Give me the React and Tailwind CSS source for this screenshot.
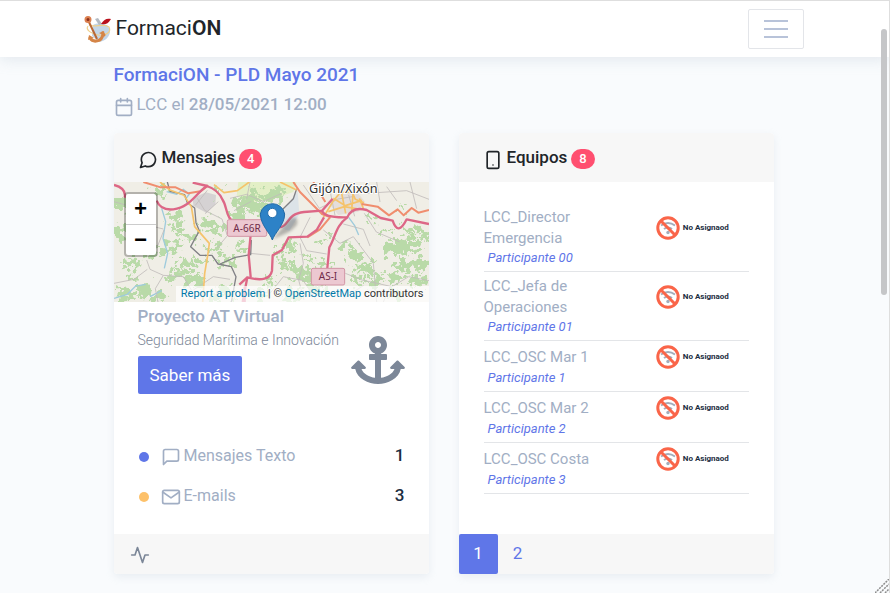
import React from "react";
import { FiActivity, FiCalendar, FiMail, FiMessageCircle, FiMessageSquare, FiSmartphone } from "react-icons/fi";
import { FaAnchor } from "react-icons/fa";

const teams = [
  { name: "LCC_Director Emergencia", member: "Participante 00" },
  { name: "LCC_Jefa de Operaciones", member: "Participante 01" },
  { name: "LCC_OSC Mar 1", member: "Participante 1" },
  { name: "LCC_OSC Mar 2", member: "Participante 2" },
  { name: "LCC_OSC Costa", member: "Participante 3" },
];

const counters = [
  { label: "Mensajes Texto", total: 1, Icon: FiMessageSquare, dot: "bg-[#5f76e8]" },
  { label: "E-mails", total: 3, Icon: FiMail, dot: "bg-[#fdc16a]" },
];

function Logo() {
  return (
    <svg viewBox="0 0 28 28" className="mt-0.5 size-7 shrink-0" aria-hidden="true">
      <path d="M9 9c4-2 10-2 15 1l2 5c0 6-5 10-11 11L8 20z" fill="#c3d6e8" />
      <path d="M11 3l3-1 4 6-3 1z" fill="#b4bac2" />
      <path d="M27 3c-4-1-7 0-10 5 4 1 7 0 10-5z" fill="#b9101c" />
      <path d="M5 9c5 3 15-2 20 2 3 6-5 9-11 8C8 18 1 14 4 10" fill="none" stroke="#efd08b" strokeWidth="1.2" />
      <path d="M4 4l9 19" stroke="#b96835" strokeWidth="2" />
      <circle cx="4" cy="3.5" r="2.5" fill="#8c2f1c" stroke="#dc8050" strokeWidth="2" />
      <path d="M6 22c3 5 12 4 13-4l1 1" fill="none" stroke="#d58547" strokeWidth="3" strokeLinecap="round" />
      <path d="M4 24l1-5 5 3zM15 17l5-2 1 5z" fill="#d58547" />
    </svg>
  );
}

// Patches of woodland, each as centre x, centre y and relative size.
const woods = [
  [30, 215, 20], [25, 300, 26], [60, 400, 22], [110, 370, 18], [165, 355, 18], [205, 300, 16], [195, 345, 15],
  [150, 175, 20], [190, 260, 22], [240, 320, 18], [225, 400, 24], [190, 430, 18], [250, 445, 22], [285, 280, 22],
  [325, 290, 18], [310, 350, 20], [345, 390, 20], [390, 350, 16], [400, 215, 26], [440, 230, 26], [425, 190, 16],
  [470, 195, 20], [385, 250, 22], [500, 185, 20], [505, 370, 14], [540, 345, 20], [560, 420, 24], [520, 400, 18],
  [480, 450, 16], [595, 430, 20], [610, 470, 22], [640, 400, 16], [540, 490, 22], [730, 370, 22], [700, 340, 16],
  [760, 410, 24], [790, 450, 20], [740, 450, 18], [850, 350, 26], [900, 340, 28], [930, 400, 26], [880, 400, 26],
  [850, 440, 22], [920, 450, 24], [900, 300, 20], [825, 300, 14], [100, 480, 22], [40, 490, 22], [150, 500, 20],
  [340, 480, 20], [310, 500, 18], [450, 490, 18], [590, 380, 12], [660, 310, 9], [620, 330, 10], [780, 260, 12],
  [870, 230, 10], [270, 390, 14], [60, 250, 10], [320, 180, 12], [850, 490, 18], [60, 440, 12], [940, 310, 16],
];

function MapDrawing() {
  return (
    <svg viewBox="12 156 945 360" preserveAspectRatio="xMidYMid slice" className="block h-full w-full" role="img" aria-label="Gijón/Xixón">
      <defs>
        <filter id="rough" x="-10%" y="-10%" width="120%" height="120%">
          <feTurbulence type="fractalNoise" baseFrequency="0.05" numOctaves="3" seed="4" />
          <feDisplacementMap in="SourceGraphic" scale="75" xChannelSelector="R" yChannelSelector="G" />
        </filter>
        <filter id="shade">
          <feGaussianBlur stdDeviation="5" />
        </filter>
      </defs>
      <rect x="-400" y="100" width="1800" height="500" fill="#f0eee6" />
      <path d="M385 156h175l-10 30-60 20-70 12-40-20z" fill="#e3efc6" />
      <path d="M680 195l60-10 25 30-20 30-60 10-25-30z" fill="#e4dedb" />
      <path d="M248 205l40-18 30 8-2 28-26 26-40-22z" fill="#d5d2d3" />
      <path d="M525 235l38-52 5 70-30 50-28-10z" fill="#dce3e8" />
      <g fill="#b9daa8" filter="url(#rough)">
        {woods.map(([x, y, s], i) => (
          <ellipse key={i} cx={x + 4} cy={y + 4} rx={s * 1.15} ry={s * 0.8} />
        ))}
      </g>
      <g fill="none" stroke="#9ecbdc" strokeWidth="4">
        <path d="M155 235l12 40-8 50 14 45-10 45" />
        <path d="M170 185l30 8 20-15 18 14-12 16M12 505l40-12 25-25 30-5M120 500l35-18" />
        <path d="M716 262l18 25 12 28" />
      </g>
      <g fill="none" stroke="#c0bcbb" strokeWidth="2.5" strokeLinejoin="round">
        <path d="M12 215l70 20 30 50 48 12M112 370l30-20 20-50M110 390l10 28 40 18 60 4 24 40" />
        <path d="M12 460l60-12 40-30M160 436l-24 40 8 40M250 480l60-40 50 8" />
        <path d="M262 205l22 36 52 26 16 50-30 36M292 181l-36 45M325 215l-40 36" />
        <path d="M360 205l50-12 50 22 55-25M420 156l-10 50M372 242l52-28" />
        <path d="M430 480l50 10 40-50 60 12 40 60M480 376l-60-6M570 340l10 60-14 50 16 60" />
        <path d="M600 262l-30 60 20 40 60 10M640 300l50 40 40-20 30 40 30 40 10 116" />
        <path d="M700 282l60 16 20 50M763 250l36 56 70 30M800 156l10 60M830 170l30 42M770 190l120-8 67 26" />
        <path d="M706 430l50 20 90 20 50-30 61 12M820 516l20-46M900 156l20 80M700 505l60-38" />
        <path d="M580 165l48 70 56-28 50-8M655 156l20 100M716 195l18 64" />
      </g>
      <g fill="none" stroke="#808085" strokeWidth="4" strokeLinejoin="round">
        <path d="M172 156l8 28 44 10 8 24 22 16 4 44 10 24-26 48 28 26 36 0 18 26 40 8 14 30 -14 76" />
        <path d="M560 176l-10 30-34 34M330 402l46-20 46-8 2-44" />
      </g>
      <g fill="none" stroke="#f5c36b" strokeWidth="5" strokeLinejoin="round">
        <path d="M150 156l30 24 42 16 22 34 10 60 44 50-4 30-10 60-6 86" />
        <path d="M418 156l-36 26-40 6-30-24" />
        <path d="M510 156l50 24M640 262l28-46 22-28 36-2 10 22 26 10" />
        <path d="M670 205l36 22 50-16M695 190l12 60M655 245l48-15 48 8M730 185l-5 55M748 205l12 30" />
      </g>
      <g fill="none" stroke="#f08d6e" strokeWidth="6" strokeLinejoin="round">
        <path d="M100 156l52 16 45 0 38 18 36-6 24-18" />
        <path d="M550 156l20 30 66 66 26 10M610 156l36 60" />
        <path d="M755 222l48 8 34 26 26-18 18 18 24-22 20 14 32-8" />
        <path d="M660 262l-30 36-38 24" />
      </g>
      <g fill="none" stroke="#dd6786" strokeWidth="7" strokeLinejoin="round">
        <path d="M12 165q38 10 32 38M140 212q12 30 50 26c50-6 64-44 100-70q34 10 48 42c16 22 4 58 50 76" />
        <path d="M248 158l44 10M422 315l-6 60 6 66M510 292c28-4 18-40 72-46l54-4 32-36" />
        <path d="M636 242q6 22 76 20 14-34 58-22l42 24 36 8q16 48 42-4l67 14" />
        <path d="M712 262c-34 24-36 60-54 90l-6 62M398 516l14-74q66 18 74-20l2-46 28-16 20-38 56-2 28-20 22-38" />
        <path d="M412 442l-24 22M404 470v46" />
      </g>
      <g fontFamily="Noto Sans, sans-serif">
        <g fill="#ecc8d1" stroke="#d295a5" strokeWidth="3">
          <rect x="352" y="269" width="118" height="50" rx="5" />
          <rect x="604" y="415" width="100" height="50" rx="5" />
        </g>
        <text x="411" y="306" textAnchor="middle" fontSize="30" fill="#702b49">A-66R</text>
        <text x="654" y="451" textAnchor="middle" fontSize="30" fill="#702b49">AS-I</text>
        <text x="700" y="188" textAnchor="middle" fontSize="38" fill="#303030" stroke="#ffffff" strokeWidth="6" paintOrder="stroke">Gijón/Xixón</text>
      </g>
      <path d="M488 328l50-60q20-12 24 4t-30 36z" fill="#555555" opacity=".4" filter="url(#shade)" />
      <path d="M487 330c-6-20-36-46-36-78a37 37 0 0 1 73 0c0 32-31 58-37 78z" fill="#2d82c7" stroke="#226aa6" strokeWidth="3" />
      <circle cx="487" cy="249" r="14" fill="#ffffff" stroke="#2770ad" strokeWidth="3" />
    </svg>
  );
}

function NoSignal() {
  return (
    <svg viewBox="0 0 24 24" className="size-6 shrink-0" fill="none" aria-hidden="true">
      <path d="M5 9.500q7-5 14 0M8 13q4-3 8 0" stroke="#a3adbb" strokeWidth="2" />
      <circle cx="12" cy="16.500" r="1.700" fill="#a3adbb" />
      <circle cx="12" cy="12" r="10.200" stroke="#fa6549" strokeWidth="3" />
      <path d="M5 5l14 14" stroke="#fa6549" strokeWidth="3" />
    </svg>
  );
}

function Card({ Icon, title, count, children, footer }) {
  return (
    <section className="flex flex-col rounded-sm bg-white shadow-[0_3px_9px_0_rgba(169,184,200,0.2)]">
      <header className="flex h-[49px] items-center gap-1 rounded-t-sm bg-[#f7f7f7] px-6 text-[#212529]">
        <Icon className="mt-1 size-5" />
        <h2 className="text-[17px] font-medium">{title}</h2>
        <span className="mt-0.5 flex h-5 items-center rounded-full bg-[#ff4f70] px-2 text-[13px] font-medium text-white">{count}</span>
      </header>
      {children}
      <footer className="mt-auto flex h-10 items-center rounded-b-sm bg-[#f7f7f7]">{footer}</footer>
    </section>
  );
}

export default function App() {
  return (
    <div className="relative min-h-screen overflow-hidden border-t border-r border-[#dedede] bg-[#f9fbfd] pb-[18px] font-[Roboto,sans-serif] text-[#1c2d41]">
      <nav className="relative h-14 bg-white pr-0.5 shadow-[0_2px_14px_0_rgba(169,184,200,0.3)]">
        <div className="mx-auto flex h-full max-w-[720px] items-center justify-between">
          <a href="#inicio" className="flex items-center gap-1 text-[21px] text-[#212529]">
            <Logo />
            <span>Formaci<b className="font-semibold">ON</b></span>
          </a>
          <button type="button" aria-label="Menú" className="flex h-10 w-14 flex-col items-center justify-center gap-1.5 rounded-xs border border-[#e3e5e9]">
            <span className="h-0.5 w-6 bg-[#b8c3d9]" />
            <span className="h-0.5 w-6 bg-[#b8c3d9]" />
            <span className="h-0.5 w-6 bg-[#b8c3d9]" />
          </button>
        </div>
      </nav>

      <div className="pr-0.5">
        <main className="mx-auto max-w-[720px] px-[30px] pt-1">
          <h1 className="text-[19px] leading-7 font-medium text-[#5f76e8]">FormaciON - PLD Mayo 2021</h1>
          <p className="mt-0.5 flex h-7 items-center gap-[3px] text-[17px] text-[#a1aec4]">
            <FiCalendar className="mt-1 size-5" />
            <span>LCC el <b className="font-medium">28/05/2021 12:00</b></span>
          </p>

          <div className="mt-3.5 grid grid-cols-2 gap-[30px]">
            <Card
              Icon={FiMessageCircle}
              title="Mensajes"
              count={4}
              footer={<FiActivity className="mt-0.5 ml-4 size-5 text-[#7c8798]" />}
            >
              <div className="relative h-[120px] overflow-hidden">
                <MapDrawing />
                <div className="absolute top-2.5 left-2.5 flex flex-col rounded-sm border-2 border-black/25 bg-white bg-clip-padding font-['Liberation_Mono',monospace] text-[22px] leading-none font-bold text-black">
                  <button type="button" aria-label="Acercar" className="h-[31px] w-[30px] border-b border-[#cccccc] pt-1">+</button>
                  <button type="button" aria-label="Alejar" className="h-[30px] w-[30px] pt-1">−</button>
                </div>
                <p className="absolute right-0 bottom-0 bg-white/70 px-[5px] text-[11px] leading-4 whitespace-nowrap text-[#333333]">
                  <a href="#problema" className="text-[#0078a8]">Report a problem</a> | © <a href="#osm" className="text-[#0078a8]">OpenStreetMap</a> contributors
                </p>
              </div>
              <div className="px-6 pt-0.5 pb-[18px]">
                <div className="flex items-end justify-between">
                  <div>
                    <h3 className="text-[17px] leading-6 font-medium text-[#a1aec4]">Proyecto AT Virtual</h3>
                    <p className="text-sm leading-6 font-light whitespace-nowrap text-[#7c8798]">Seguridad Marítima e Innovación</p>
                    <button type="button" className="mt-1 h-[38px] rounded-xs bg-[#5f76e8] px-3 pt-0.5 text-[17px] text-white">Saber más</button>
                  </div>
                  <FaAnchor className="mb-2.5 h-12 w-[54px] shrink-0 text-[#7c8798]" />
                </div>
                <ul className="mt-[42px]">
                  {counters.map(({ label, total, Icon, dot }) => (
                    <li key={label} className="flex h-10 items-center text-base text-[#a1aec4]">
                      <span className={`mt-0.5 mr-3 ml-px size-2.5 rounded-full ${dot}`} />
                      <Icon className="mt-0.5 mr-[3px] size-5" />
                      <span>{label}</span>
                      <b className="ml-auto text-[17px] font-medium text-[#1c2d41]">{total}</b>
                    </li>
                  ))}
                </ul>
              </div>
            </Card>

            <Card
              Icon={FiSmartphone}
              title="Equipos"
              count={8}
              footer={
                <nav aria-label="Páginas" className="flex h-full text-[17px] text-[#5f76e8]">
                  <a href="#1" aria-current="page" className="flex w-[39px] items-center justify-center rounded-xs bg-[#5f76e8] text-white">1</a>
                  <a href="#2" className="flex w-10 items-center justify-center">2</a>
                </nav>
              }
            >
              <ul className="px-[25px] pt-[21px] pb-10">
                {teams.map(({ name, member }) => (
                  <li key={member} className="border-b border-[#e3e5e8] py-1">
                    <div className="flex min-h-6 items-center">
                      <span className="w-[65%] pr-12 text-[15px] leading-[21px] text-[#a1aec4]">{name}</span>
                      <span className="flex items-center gap-[3px] text-[8px] font-bold whitespace-nowrap">
                        <NoSignal />
                        No Asignaod
                      </span>
                    </div>
                    <p className="pl-1 text-[13px] leading-[18px] text-[#5f76e8] italic">{member}</p>
                  </li>
                ))}
              </ul>
            </Card>
          </div>
        </main>
      </div>

      <div className="absolute top-7 right-0.5 h-[266px] w-1.5 rounded-full bg-[#c5c6c8]" />
      <svg viewBox="0 0 14 14" className="absolute right-0 bottom-0 size-3.5" aria-hidden="true">
        <path d="M0 14 14 0M5 14l9-9M10 14l4-4" stroke="#8d8d8d" strokeWidth="1.500" strokeDasharray="2 1" />
      </svg>
    </div>
  );
}
